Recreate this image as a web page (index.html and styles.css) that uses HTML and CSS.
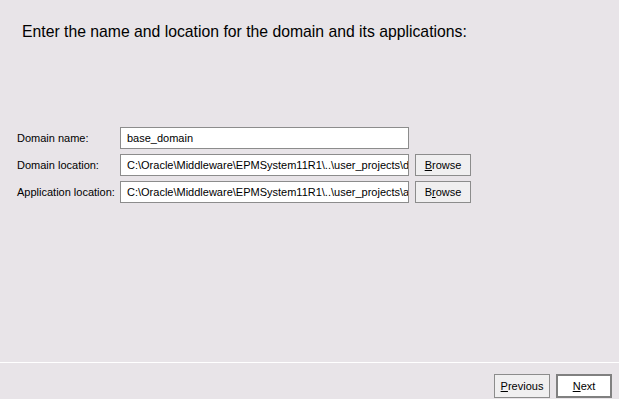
FILE: index.html
```html
<!DOCTYPE html>
<html>
<head>
<meta charset="utf-8">
<link rel="stylesheet" href="styles.css">
</head>
<body>
<div class="page">
  <div class="main">
    <h1 class="title">Enter the name and location for the domain and its applications:</h1>
    <div class="form">
      <div class="row">
        <div class="label">Domain name:</div>
        <div class="field">base_domain</div>
      </div>
      <div class="row">
        <div class="label">Domain location:</div>
        <div class="field">C:\Oracle\Middleware\EPMSystem11R1\..\user_projects\d</div>
        <div class="btn browse"><span class="mn">B</span>rowse</div>
      </div>
      <div class="row">
        <div class="label">Application location:</div>
        <div class="field">C:\Oracle\Middleware\EPMSystem11R1\..\user_projects\a</div>
        <div class="btn browse">B<span class="mn">r</span>owse</div>
      </div>
    </div>
  </div>
  <div class="sep"></div>
  <div class="footer">
    <div class="btn nav"><span class="mn">P</span>revious</div>
    <div class="btn nav default"><span class="mn">N</span>ext</div>
  </div>
</div>
</body>
</html>
```

FILE: styles.css
```css
html, body {
  margin: 0;
  padding: 0;
  background: #e8e4e8;
}
body {
  font-family: "Liberation Sans", Arial, sans-serif;
  font-size: 11px;
  color: #000;
}
.page {
  width: 619px;
  height: 399px;
  display: flex;
  flex-direction: column;
  overflow: hidden;
}
.main {
  flex: 1;
}
.title {
  margin: 0;
  padding: 23px 0 0 22px;
  font-size: 15.75px;
  font-weight: normal;
  line-height: 18px;
}
.form {
  margin-top: 86px;
  padding-left: 17px;
  display: flex;
  flex-direction: column;
  gap: 5px;
}
.row {
  display: flex;
  align-items: center;
  height: 22px;
}
.label {
  width: 103px;
}
.field {
  box-sizing: border-box;
  width: 289px;
  height: 22px;
  line-height: 20px;
  padding: 0 6px;
  background: #fff;
  border: 1px solid #8c8c8c;
  white-space: nowrap;
  overflow: hidden;
}
.btn {
  box-sizing: border-box;
  height: 22px;
  line-height: 20px;
  text-align: center;
  background: #f0eff0;
  border: 1px solid #8c8c8c;
}
.mn {
  text-decoration: underline;
}
.browse {
  width: 56px;
  margin-left: 6px;
}
.sep {
  height: 1px;
  background: #fff;
}
.footer {
  height: 36px;
  display: flex;
  justify-content: flex-end;
  align-items: flex-start;
  padding: 11px 7px 0 0;
  box-sizing: border-box;
  gap: 6px;
}
.nav {
  width: 56px;
  height: 24px;
  line-height: 22px;
}
.default {
  background: #fff;
  border: 2px solid #808080;
  line-height: 20px;
}
```
